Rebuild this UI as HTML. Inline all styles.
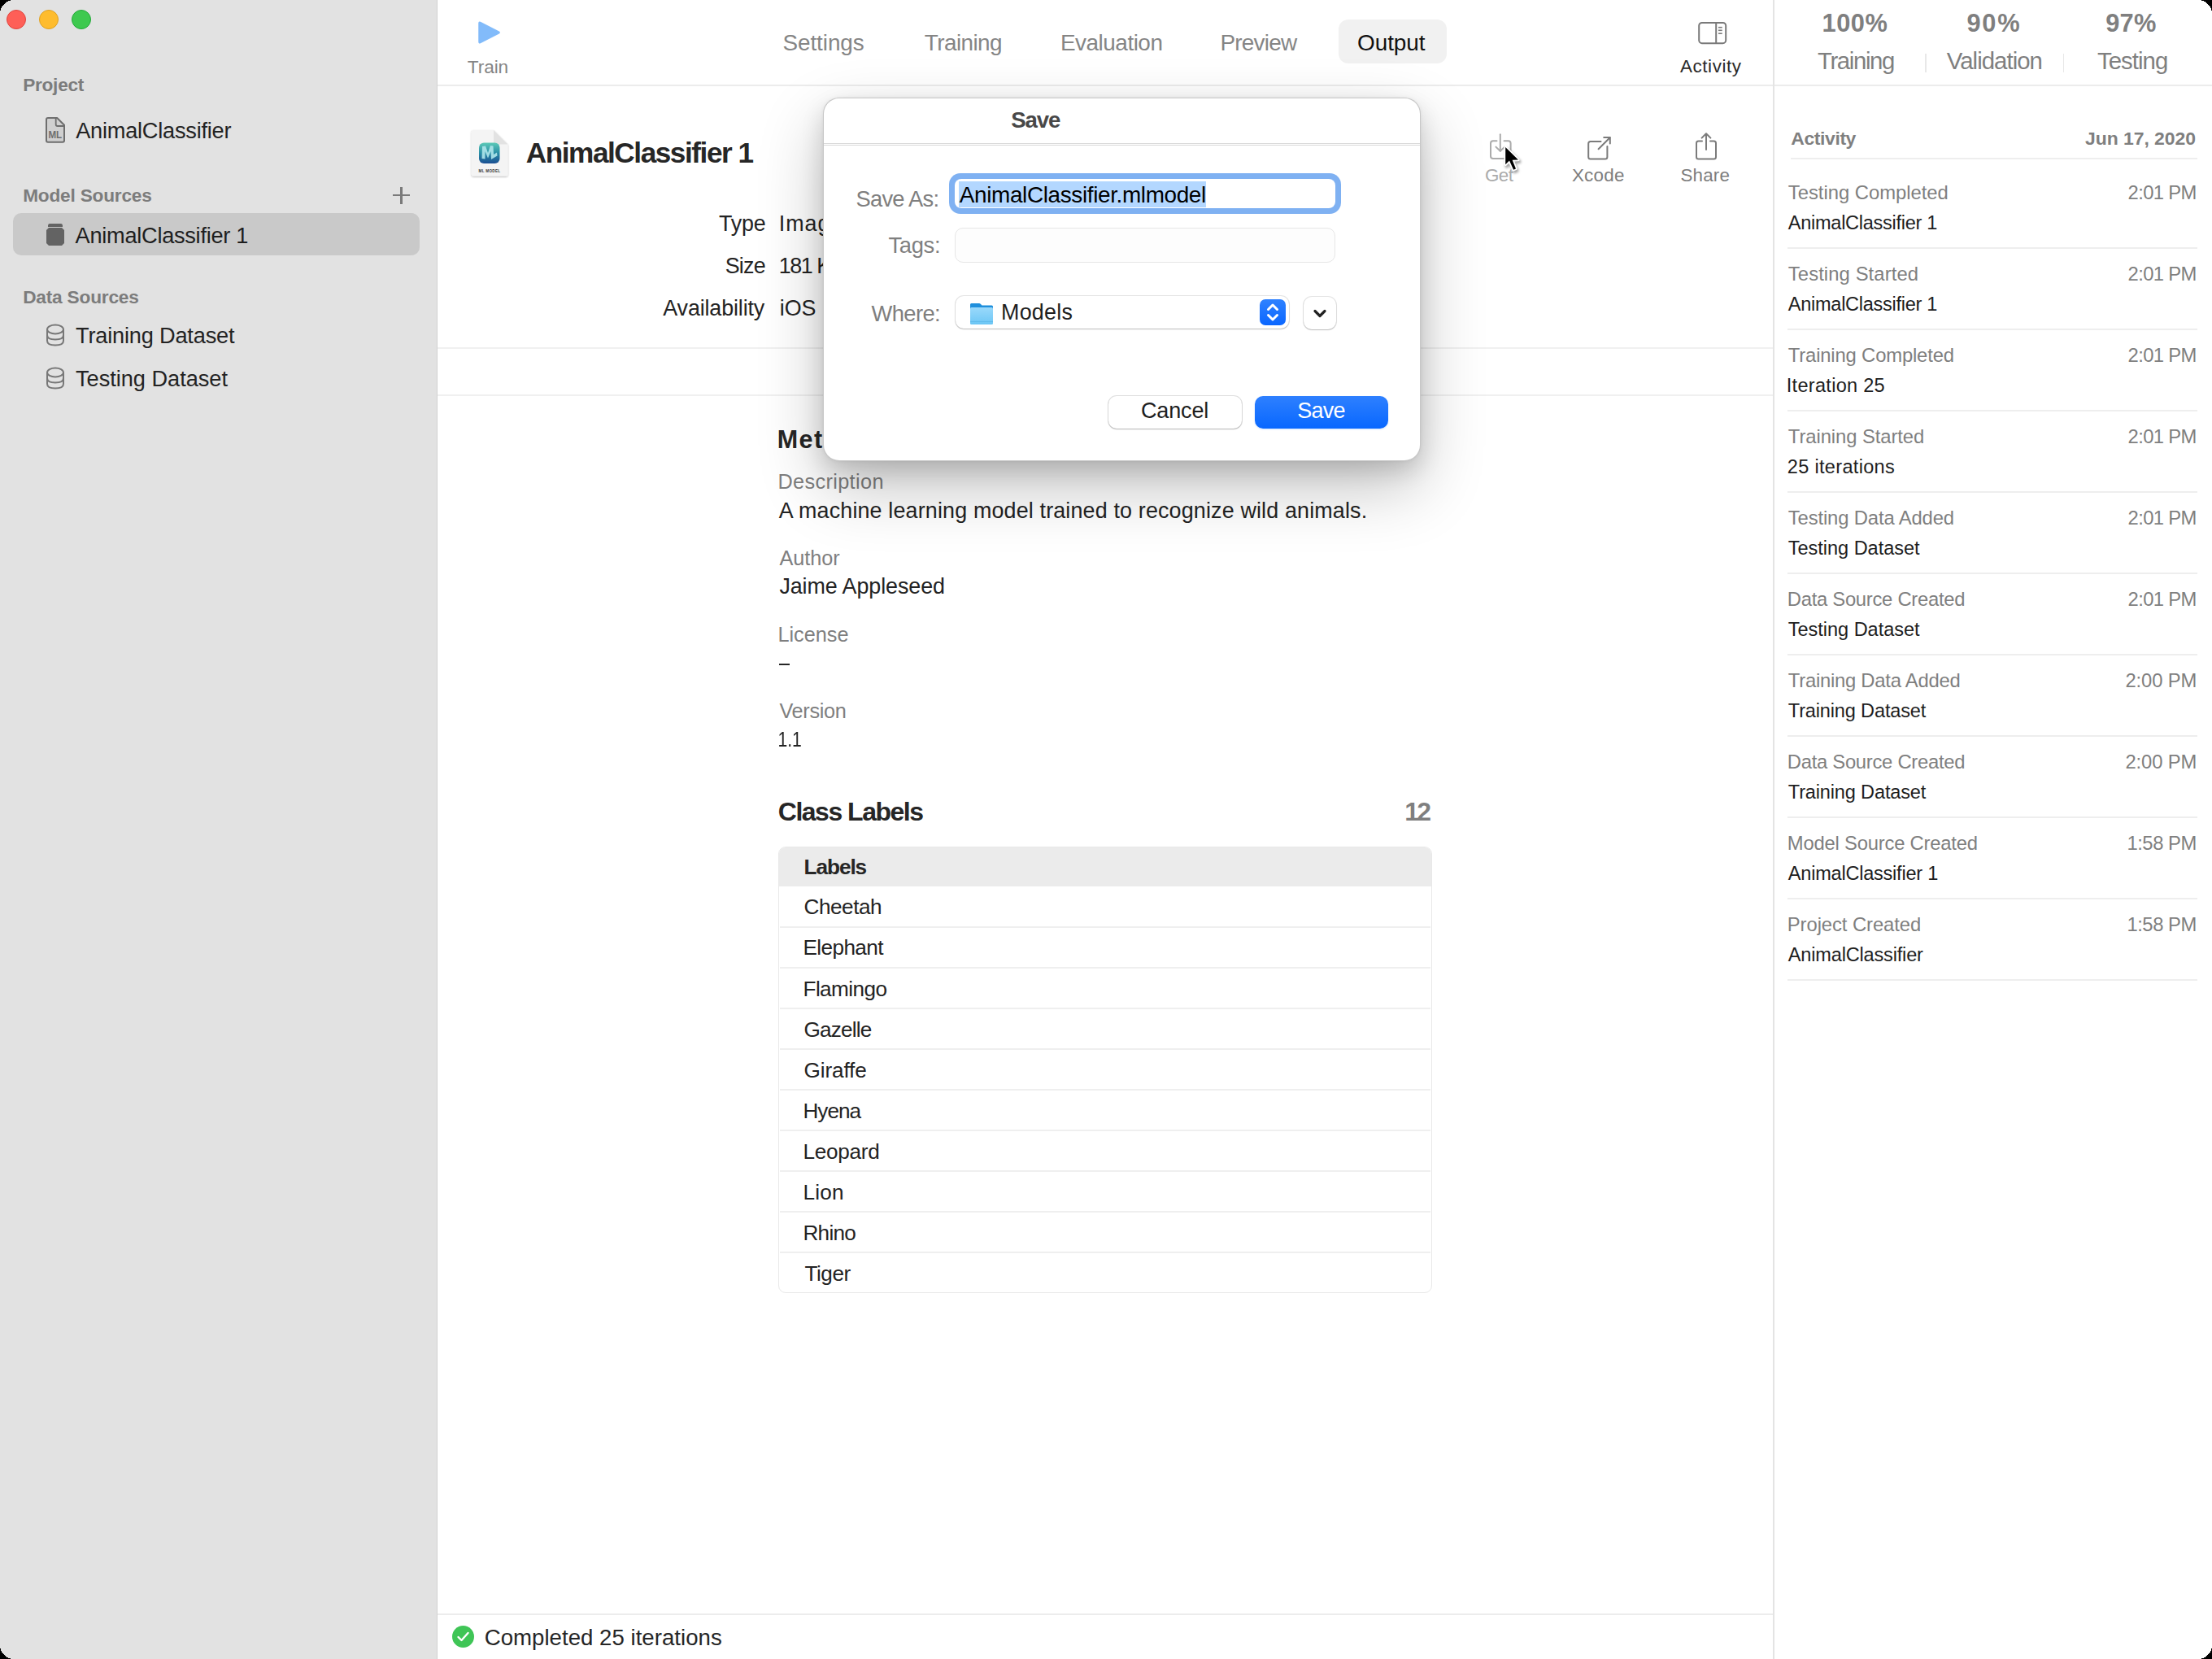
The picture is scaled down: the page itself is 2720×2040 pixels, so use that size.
<!DOCTYPE html>
<html><head><meta charset="utf-8"><style>
html,body{margin:0;padding:0;background:#000;width:2720px;height:2040px;overflow:hidden}
#win{position:absolute;left:0;top:0;width:2720px;height:2040px;overflow:hidden;background:#fff;font-family:"Liberation Sans",sans-serif}
.t{position:absolute;white-space:nowrap;line-height:1;font-family:"Liberation Sans",sans-serif}
.a{position:absolute;box-sizing:border-box}
svg{position:absolute;overflow:visible}

</style></head><body>
<div id="win">
<!-- sidebar -->
<div class="a" style="left:0;top:0;width:538px;height:2040px;background:#e2e2e2;border-right:1px solid #d2d2d2"></div>
<div class="a" style="left:8px;top:12px;width:24px;height:24px;border-radius:50%;background:#fe5f57;border:1px solid #e0443e"></div>
<div class="a" style="left:48px;top:12px;width:24px;height:24px;border-radius:50%;background:#febc2e;border:1px solid #dea123"></div>
<div class="a" style="left:88px;top:12px;width:24px;height:24px;border-radius:50%;background:#3ec94f;border:1px solid #25a93a"></div>
<!-- selection -->
<div class="a" style="left:16px;top:262px;width:500px;height:52px;border-radius:10px;background:#c9c9c9"></div>
<!-- sidebar icons -->
<svg style="left:56px;top:144px" width="24" height="32" viewBox="0 0 24 32">
  <path d="M1 3 Q1 1 3 1 H14.2 L23 9.8 V28.7 Q23 30.7 21 30.7 H3 Q1 30.7 1 28.7 Z" fill="#d0d0d0" stroke="#6e6e6e" stroke-width="2" stroke-linejoin="round"/>
  <path d="M12.7 1 V9 Q12.7 11 14.7 11 H23" fill="none" stroke="#6e6e6e" stroke-width="1.8"/>
  <text x="3.4" y="26" font-family="Liberation Sans" font-weight="700" font-size="13" fill="#6e6e6e" textLength="16.8" lengthAdjust="spacingAndGlyphs">ML</text>
</svg>
<svg style="left:56px;top:274px" width="24" height="30" viewBox="0 0 24 30">
  <path d="M5 1 H19 Q20.5 1 21 3 V5 H3 V3 Q3.5 1 5 1 Z" fill="#636363"/>
  <path d="M4 6 H20 L23 9 V25 L20 28 H4 L1 25 V9 Z" fill="#636363"/>
</svg>
<svg style="left:56px;top:398px" width="24" height="28" viewBox="0 0 24 28">
  <g fill="none" stroke="#787878" stroke-width="2">
  <ellipse cx="12" cy="7" rx="10" ry="5.5"/>
  <path d="M2 7 V21 Q2 26.5 12 26.5 Q22 26.5 22 21 V7"/>
  <path d="M2 14 Q2 19.5 12 19.5 Q22 19.5 22 14"/>
  </g>
</svg>
<svg style="left:56px;top:451px" width="24" height="28" viewBox="0 0 24 28">
  <g fill="none" stroke="#787878" stroke-width="2">
  <ellipse cx="12" cy="7" rx="10" ry="5.5"/>
  <path d="M2 7 V21 Q2 26.5 12 26.5 Q22 26.5 22 21 V7"/>
  <path d="M2 14 Q2 19.5 12 19.5 Q22 19.5 22 14"/>
  </g>
</svg>
<!-- plus -->
<div class="a" style="left:483px;top:239px;width:21px;height:2.4px;background:#7a7a7a"></div>
<div class="a" style="left:492.3px;top:229.8px;width:2.4px;height:21px;background:#7a7a7a"></div>

<!-- toolbar line -->
<div class="a" style="left:538px;top:104px;width:2182px;height:2px;background:#ececec"></div>
<!-- right divider -->
<div class="a" style="left:2180px;top:0;width:2px;height:2040px;background:#e4e4e4"></div>
<!-- play icon -->
<svg style="left:587px;top:25px" width="30" height="30" viewBox="0 0 30 30">
  <path d="M3.5 2.5 Q2 1.8 2 3.5 V26.5 Q2 28.2 3.5 27.5 L26.5 15.8 Q27.8 15 26.5 14.2 Z" fill="#82bbfa" stroke="#82bbfa" stroke-width="1.5" stroke-linejoin="round"/>
</svg>
<!-- Output highlight -->
<div class="a" style="left:1646px;top:24px;width:133px;height:54px;border-radius:12px;background:#f1f1f1"></div>
<!-- activity toolbar icon -->
<svg style="left:2087px;top:26px" width="36" height="28" viewBox="0 0 36 28">
  <rect x="2.2" y="2" width="33" height="25.2" rx="3.6" fill="none" stroke="#7a7a7a" stroke-width="2"/>
  <line x1="23.2" y1="2" x2="23.2" y2="27.2" stroke="#7a7a7a" stroke-width="2"/>
  <line x1="26" y1="7.7" x2="30.7" y2="7.7" stroke="#7a7a7a" stroke-width="1.6"/>
  <line x1="26" y1="11.3" x2="30.7" y2="11.3" stroke="#7a7a7a" stroke-width="1.6"/>
  <line x1="26" y1="15.2" x2="30.7" y2="15.2" stroke="#7a7a7a" stroke-width="1.6"/>
</svg>

<!-- header -->
<svg style="left:578px;top:158px" width="50" height="62" viewBox="0 0 50 62">
  <defs>
   <linearGradient id="mlg" x1="0" y1="0" x2="0" y2="1"><stop offset="0" stop-color="#5ccab7"/><stop offset="0.5" stop-color="#2a8fa6"/><stop offset="1" stop-color="#1b4f93"/></linearGradient>
   <filter id="dsh" x="-20%" y="-20%" width="140%" height="140%"><feDropShadow dx="0" dy="1" stdDeviation="1" flood-color="#000" flood-opacity="0.3"/></filter>
  </defs>
  <path d="M4 2 H29 L46.5 19.5 V56 Q46.5 58.5 44 58.5 H4 Q1.8 58.5 1.8 56 V4.5 Q1.8 2 4 2 Z" fill="#f4f4f4" filter="url(#dsh)"/>
  <path d="M29 2 V16.5 Q29 19.5 32 19.5 H46.5 Z" fill="#e2e2e2"/>
  <rect x="11" y="17.5" width="25.5" height="25.5" rx="6" fill="url(#mlg)"/>
  <path d="M14.5 37 L15 22 L19 21.5 L22 30 L25 21 L28.5 21.5 L29 32 L33 29.5 L33.5 33.5 L26 38 L25.5 28 L22 36.5 L18.5 28 L18.5 37.5 Z" fill="#aee6ea" opacity="0.9"/>
  <text x="24" y="53.5" font-family="Liberation Sans" font-weight="700" font-size="4.6" fill="#333" text-anchor="middle" letter-spacing="0.3">ML MODEL</text>
</svg>
<!-- header separators -->
<div class="a" style="left:538px;top:427px;width:1642px;height:2px;background:#f0f0f0"></div>
<div class="a" style="left:538px;top:485px;width:1642px;height:2px;background:#f0f0f0"></div>

<!-- Get / Xcode / Share icons -->
<svg style="left:1830px;top:163px" width="30" height="36" viewBox="0 0 30 36">
  <g fill="none" stroke="#ababab" stroke-width="2" stroke-linecap="round" stroke-linejoin="round">
  <path d="M10.5 10.2 H6 Q3 10.2 3 13.2 V29.1 Q3 32.1 6 32.1 H24.6 Q27.6 32.1 27.6 29.1 V13.2 Q27.6 10.2 24.6 10.2 H19.5"/>
  <path d="M14.8 2.2 V22.8"/><path d="M9.4 17.6 L14.8 22.8 L20.2 17.6"/>
  </g>
</svg>
<svg style="left:1950px;top:165px" width="34" height="34" viewBox="0 0 34 34">
  <g fill="none" stroke="#7b7b7b" stroke-width="2" stroke-linecap="round" stroke-linejoin="round">
  <path d="M18.5 9.1 H5.7 Q3.2 9.1 3.2 11.6 V28.1 Q3.2 30.6 5.7 30.6 H23.9 Q26.4 30.6 26.4 28.1 V15"/>
  <path d="M15.6 18.3 L29.6 4.2"/><path d="M22.2 4 H29.8 V11.5"/>
  </g>
</svg>
<svg style="left:2083px;top:162px" width="30" height="36" viewBox="0 0 30 36">
  <g fill="none" stroke="#7b7b7b" stroke-width="2" stroke-linecap="round" stroke-linejoin="round">
  <path d="M10 11.6 H5.5 Q3 11.6 3 14.1 V31 Q3 33.5 5.5 33.5 H24.5 Q27 33.5 27 31 V14.1 Q27 11.6 24.5 11.6 H20"/>
  <path d="M15 3 V22"/><path d="M9.6 7.6 L15 2.2 L20.4 7.6"/>
  </g>
</svg>

<!-- metadata dash -->
<div class="a" style="left:958px;top:815.5px;width:13px;height:2.2px;background:#262626"></div>

<!-- table -->
<div class="a" style="left:957px;top:1041px;width:804px;height:549px;border:1.5px solid #e9e9e9;border-radius:9px;overflow:hidden;background:#fff">
  <div class="a" style="left:0;top:0;width:100%;height:48px;background:#ebebeb"></div>
</div>
<div class="a" style="left:959px;top:1139.0px;width:800px;height:1.5px;background:#efefef"></div>
<div class="a" style="left:959px;top:1189.0px;width:800px;height:1.5px;background:#efefef"></div>
<div class="a" style="left:959px;top:1239.1px;width:800px;height:1.5px;background:#efefef"></div>
<div class="a" style="left:959px;top:1289.2px;width:800px;height:1.5px;background:#efefef"></div>
<div class="a" style="left:959px;top:1339.2px;width:800px;height:1.5px;background:#efefef"></div>
<div class="a" style="left:959px;top:1389.2px;width:800px;height:1.5px;background:#efefef"></div>
<div class="a" style="left:959px;top:1439.3px;width:800px;height:1.5px;background:#efefef"></div>
<div class="a" style="left:959px;top:1489.3px;width:800px;height:1.5px;background:#efefef"></div>
<div class="a" style="left:959px;top:1539.4px;width:800px;height:1.5px;background:#efefef"></div>
<div class="a" style="left:538px;top:1984px;width:1642px;height:2px;background:#ececec"></div>
<svg style="left:555px;top:1998px" width="29" height="29" viewBox="0 0 29 29"><circle cx="14.5" cy="14.5" r="13.5" fill="#3fc556"/><path d="M8.5 15 L12.5 19 L20.5 10" fill="none" stroke="#fff" stroke-width="2.4" stroke-linecap="round" stroke-linejoin="round"/></svg>
<div class="a" style="left:2367px;top:66px;width:1.5px;height:23px;background:#e8e8e8"></div>
<div class="a" style="left:2536.5px;top:66px;width:1.5px;height:23px;background:#e8e8e8"></div>
<div class="a" style="left:2202px;top:194px;width:500px;height:2px;background:#eeeeee"></div>
<div class="a" style="left:2198px;top:304px;width:504px;height:2px;background:#eeeeee"></div>
<div class="a" style="left:2198px;top:404px;width:504px;height:2px;background:#eeeeee"></div>
<div class="a" style="left:2198px;top:504px;width:504px;height:2px;background:#eeeeee"></div>
<div class="a" style="left:2198px;top:604px;width:504px;height:2px;background:#eeeeee"></div>
<div class="a" style="left:2198px;top:704px;width:504px;height:2px;background:#eeeeee"></div>
<div class="a" style="left:2198px;top:804px;width:504px;height:2px;background:#eeeeee"></div>
<div class="a" style="left:2198px;top:904px;width:504px;height:2px;background:#eeeeee"></div>
<div class="a" style="left:2198px;top:1004px;width:504px;height:2px;background:#eeeeee"></div>
<div class="a" style="left:2198px;top:1104px;width:504px;height:2px;background:#eeeeee"></div>
<div class="a" style="left:2198px;top:1204px;width:504px;height:2px;background:#eeeeee"></div>
<!-- dialog -->
<div class="a" style="left:1012px;top:119.8px;width:734.5px;height:447.2px;border-radius:20px;background:#fff;border:1px solid rgba(0,0,0,0.22);box-shadow:0 32px 80px rgba(0,0,0,0.24), 0 12px 28px rgba(0,0,0,0.14), 0 0 4px rgba(0,0,0,0.06);z-index:40"></div>
<div class="a" style="left:1013px;top:176px;width:733px;height:3px;border-top:1px solid #d9d9d9;border-bottom:1px solid #d9d9d9;z-index:45"></div>
<!-- save as field -->
<div class="a" style="left:1167px;top:213px;width:482px;height:50px;border-radius:14px;background:#7fb1f2;z-index:45"></div>
<div class="a" style="left:1174px;top:220px;width:468px;height:36px;border-radius:8px;background:#fff;z-index:46"></div>
<div class="a" style="left:1179px;top:223px;width:303.5px;height:31.5px;background:#b3d7ff;z-index:47"></div>
<!-- tags field -->
<div class="a" style="left:1173.5px;top:279.5px;width:468px;height:43px;border-radius:10px;background:#fdfdfd;border:1.5px solid #e6e6e6;z-index:45"></div>
<!-- where popup -->
<div class="a" style="left:1175px;top:364px;width:410px;height:40px;border-radius:10px;background:#fff;box-shadow:0 0 0 1px rgba(0,0,0,0.1), 0 1px 1.5px rgba(0,0,0,0.18);z-index:45"></div>
<svg style="left:1192px;top:372px;z-index:46" width="30" height="28" viewBox="0 0 30 28">
  <defs><linearGradient id="fg" x1="0" y1="0" x2="0" y2="1"><stop offset="0" stop-color="#9ad9fb"/><stop offset="1" stop-color="#6cc6f5"/></linearGradient></defs>
  <path d="M2.5 1 H12 Q13 1 14 2 L15.5 3.5 H27.5 Q29 3.5 29 5 V10 H1 V2.5 Q1 1 2.5 1 Z" fill="#1f8fdc"/>
  <path d="M1 7.5 Q1 6 2.5 6 H27.5 Q29 6 29 7.5 V25.5 Q29 27 27.5 27 H2.5 Q1 27 1 25.5 Z" fill="url(#fg)"/>
  <rect x="1" y="23" width="28" height="1" fill="#5ab6e8" opacity="0.7"/>
</svg>
<div class="a" style="left:1549px;top:368px;width:32px;height:32px;border-radius:7px;background:linear-gradient(#2f82ff,#0a66ff);z-index:46"></div>
<svg style="left:1549px;top:368px;z-index:47" width="32" height="32" viewBox="0 0 32 32">
  <g fill="none" stroke="#fff" stroke-width="3" stroke-linecap="round" stroke-linejoin="round">
  <path d="M10.5 12.5 L16 7 L21.5 12.5"/><path d="M10.5 19.5 L16 25 L21.5 19.5"/>
  </g>
</svg>
<div class="a" style="left:1603px;top:365px;width:40px;height:40px;border-radius:10px;background:#fff;box-shadow:0 0 0 1px rgba(0,0,0,0.1), 0 1px 1.5px rgba(0,0,0,0.18);z-index:45"></div>
<svg style="left:1603px;top:365px;z-index:46" width="40" height="40" viewBox="0 0 40 40">
  <path d="M14 17.5 L20 23.5 L26 17.5" fill="none" stroke="#222" stroke-width="3.2" stroke-linecap="round" stroke-linejoin="round"/>
</svg>
<!-- buttons -->
<div class="a" style="left:1363px;top:487px;width:164px;height:40px;border-radius:10px;background:#fff;box-shadow:0 0 0 1px rgba(0,0,0,0.12), 0 1px 1.5px rgba(0,0,0,0.2);z-index:45"></div>
<div class="a" style="left:1543px;top:487px;width:164px;height:40px;border-radius:10px;background:linear-gradient(#2e80ff,#0867ff);box-shadow:0 1px 2px rgba(0,100,255,0.2);z-index:45"></div>

<!-- cursor -->
<svg style="left:0;top:0;z-index:60" width="2720" height="2040" viewBox="0 0 2720 2040">
  <defs><filter id="csh" x="-50%" y="-50%" width="200%" height="200%"><feGaussianBlur stdDeviation="1.6"/></filter></defs>
  <path d="M1851.2 181 L1851.2 202.3 L1856 197.6 L1861.1 208.7 L1864 207.4 L1859.6 196.8 L1866.9 196.5 Z" transform="translate(1.5,2.5)" fill="none" stroke="rgba(0,0,0,0.35)" stroke-width="4" stroke-linejoin="round" filter="url(#csh)"/>
  <path d="M1851.2 181 L1851.2 202.3 L1856 197.6 L1861.1 208.7 L1864 207.4 L1859.6 196.8 L1866.9 196.5 Z" fill="#000" stroke="#fff" stroke-width="3.6" stroke-linejoin="round" paint-order="stroke"/>
</svg>

<svg style="left:0;top:0;z-index:100" width="2720" height="2040" viewBox="0 0 2720 2040" shape-rendering="crispEdges">
  <path d="M0 0 H17 A17 17 0 0 0 0 17 Z" fill="#000"/>
  <path d="M2720 0 H2703 A17 17 0 0 1 2720 17 Z" fill="#000"/>
  <path d="M0 2040 H17 A17 17 0 0 1 0 2023 Z" fill="#000"/>
  <path d="M2720 2040 H2703 A17 17 0 0 0 2720 2023 Z" fill="#000"/>
</svg>

<div class="t" style="left:28.2px;top:92.8px;font-size:22.67px;font-weight:700;color:#7c7c7c;letter-spacing:-0.28px;">Project</div>
<div class="t" style="left:93.2px;top:146.7px;font-size:27.18px;color:#232323;letter-spacing:-0.23px;">AnimalClassifier</div>
<div class="t" style="left:28.2px;top:228.5px;font-size:22.67px;font-weight:700;color:#7c7c7c;letter-spacing:-0.21px;">Model Sources</div>
<div class="t" style="left:92.6px;top:275.8px;font-size:27.18px;color:#1e1e1e;letter-spacing:-0.27px;">AnimalClassifier 1</div>
<div class="t" style="left:28.2px;top:353.6px;font-size:22.67px;font-weight:700;color:#7c7c7c;letter-spacing:-0.20px;">Data Sources</div>
<div class="t" style="left:93.0px;top:398.7px;font-size:27.18px;color:#232323;letter-spacing:-0.19px;">Training Dataset</div>
<div class="t" style="left:93.0px;top:451.7px;font-size:27.18px;color:#232323;letter-spacing:-0.02px;">Testing Dataset</div>
<div class="t" style="left:574.8px;top:70.5px;font-size:22.67px;color:#858585;letter-spacing:-0.09px;">Train</div>
<div class="t" style="left:962.4px;top:38.6px;font-size:27.91px;color:#858585;letter-spacing:-0.07px;">Settings</div>
<div class="t" style="left:1136.8px;top:38.6px;font-size:27.91px;color:#858585;letter-spacing:-0.58px;">Training</div>
<div class="t" style="left:1304.0px;top:38.6px;font-size:27.91px;color:#858585;letter-spacing:-0.49px;">Evaluation</div>
<div class="t" style="left:1500.5px;top:38.6px;font-size:27.91px;color:#858585;letter-spacing:-0.77px;">Preview</div>
<div class="t" style="left:1669.0px;top:38.6px;font-size:27.91px;color:#111;letter-spacing:-0.04px;">Output</div>
<div class="t" style="left:2066.0px;top:71.0px;font-size:22.38px;color:#2a2a2a;letter-spacing:0.59px;">Activity</div>
<div class="t" style="left:646.8px;top:170.3px;font-size:35.17px;font-weight:700;color:#262626;letter-spacing:-1.44px;">AnimalClassifier 1</div>
<div class="t" style="left:884.0px;top:262.0px;font-size:26.89px;color:#232323;letter-spacing:-0.17px;">Type</div>
<div class="t" style="left:891.7px;top:313.7px;font-size:26.89px;color:#232323;letter-spacing:-0.74px;">Size</div>
<div class="t" style="left:815.3px;top:366.0px;font-size:26.89px;color:#232323;letter-spacing:-0.14px;">Availability</div>
<div class="t" style="left:957.8px;top:262.0px;font-size:26.89px;color:#232323;letter-spacing:0.95px;">Image Classifier</div>
<div class="t" style="left:957.8px;top:313.7px;font-size:26.89px;color:#232323;letter-spacing:-1.45px;">181 KB</div>
<div class="t" style="left:958.8px;top:366.0px;font-size:26.89px;color:#232323;letter-spacing:-0.07px;">iOS 14.0+</div>
<div class="t" style="left:1826.0px;top:204.8px;font-size:22.38px;color:#ababab;letter-spacing:-0.57px;">Get</div>
<div class="t" style="left:1932.9px;top:204.8px;font-size:22.38px;color:#7d7d7d;letter-spacing:0.25px;">Xcode</div>
<div class="t" style="left:2066.5px;top:204.8px;font-size:22.38px;color:#7d7d7d;letter-spacing:0.16px;">Share</div>
<div class="t" style="left:955.8px;top:525.0px;font-size:30.52px;font-weight:700;color:#262626;letter-spacing:1.4px;">Metadata</div>
<div class="t" style="left:956.4px;top:580.0px;font-size:25.29px;color:#7f7f7f;letter-spacing:0.36px;">Description</div>
<div class="t" style="left:957.8px;top:614.6px;font-size:26.89px;color:#232323;letter-spacing:0.16px;">A machine learning model trained to recognize wild animals.</div>
<div class="t" style="left:958.4px;top:674.0px;font-size:25.29px;color:#7f7f7f;letter-spacing:-0.05px;">Author</div>
<div class="t" style="left:958.4px;top:708.3px;font-size:26.89px;color:#232323;letter-spacing:-0.08px;">Jaime Appleseed</div>
<div class="t" style="left:956.4px;top:767.7px;font-size:25.29px;color:#7f7f7f;">License</div>
<div class="t" style="left:958.4px;top:861.5px;font-size:25.29px;color:#7f7f7f;letter-spacing:-0.31px;">Version</div>
<div class="t" style="left:956.4px;top:896.0px;font-size:26.6px;color:#232323;transform:scaleX(0.7958);transform-origin:2.00px 0;">1.1</div>
<div class="t" style="left:956.8px;top:982.4px;font-size:31.98px;font-weight:700;color:#262626;letter-spacing:-1.48px;">Class Labels</div>
<div class="t" style="left:1727.2px;top:982.4px;font-size:31.98px;font-weight:700;color:#7f7f7f;letter-spacing:-2.68px;">12</div>
<div class="t" style="left:988.5px;top:1052.5px;font-size:26.16px;font-weight:700;color:#262626;letter-spacing:-1.04px;">Labels</div>
<div class="t" style="left:988.5px;top:1102.4px;font-size:26.16px;color:#232323;letter-spacing:-0.46px;">Cheetah</div>
<div class="t" style="left:987.5px;top:1152.4px;font-size:26.16px;color:#232323;letter-spacing:-0.61px;">Elephant</div>
<div class="t" style="left:987.5px;top:1202.5px;font-size:26.16px;color:#232323;letter-spacing:-0.59px;">Flamingo</div>
<div class="t" style="left:988.5px;top:1252.5px;font-size:26.16px;color:#232323;letter-spacing:-0.82px;">Gazelle</div>
<div class="t" style="left:988.5px;top:1302.6px;font-size:26.16px;color:#232323;letter-spacing:-0.13px;">Giraffe</div>
<div class="t" style="left:987.5px;top:1352.6px;font-size:26.16px;color:#232323;letter-spacing:-1.02px;">Hyena</div>
<div class="t" style="left:987.5px;top:1402.7px;font-size:26.16px;color:#232323;letter-spacing:-0.29px;">Leopard</div>
<div class="t" style="left:987.5px;top:1452.7px;font-size:26.16px;color:#232323;letter-spacing:0.17px;">Lion</div>
<div class="t" style="left:987.5px;top:1502.8px;font-size:26.16px;color:#232323;letter-spacing:-0.77px;">Rhino</div>
<div class="t" style="left:989.5px;top:1552.8px;font-size:26.16px;color:#232323;letter-spacing:-0.48px;">Tiger</div>
<div class="t" style="left:595.7px;top:1999.5px;font-size:27.62px;color:#262626;letter-spacing:0.02px;">Completed 25 iterations</div>
<div class="t" style="left:2240.6px;top:13.6px;font-size:30.81px;font-weight:700;color:#7f7f7f;letter-spacing:0.47px;">100%</div>
<div class="t" style="left:2418.4px;top:13.6px;font-size:30.81px;font-weight:700;color:#7f7f7f;letter-spacing:1.82px;">90%</div>
<div class="t" style="left:2589.2px;top:13.6px;font-size:30.81px;font-weight:700;color:#7f7f7f;letter-spacing:0.27px;">97%</div>
<div class="t" style="left:2235.0px;top:59.6px;font-size:29.36px;color:#7f7f7f;letter-spacing:-1.38px;">Training</div>
<div class="t" style="left:2393.8px;top:59.6px;font-size:29.36px;color:#7f7f7f;letter-spacing:-0.96px;">Validation</div>
<div class="t" style="left:2579.0px;top:59.6px;font-size:29.36px;color:#7f7f7f;letter-spacing:-0.95px;">Testing</div>
<div class="t" style="left:2202.3px;top:158.5px;font-size:22.97px;font-weight:700;color:#7f7f7f;letter-spacing:-0.41px;">Activity</div>
<div class="t" style="left:2564.1px;top:158.5px;font-size:22.97px;font-weight:700;color:#7f7f7f;letter-spacing:-0.07px;">Jun 17, 2020</div>
<div class="t" style="left:2198.8px;top:224.6px;font-size:23.84px;color:#7f7f7f;letter-spacing:-0.02px;">Testing Completed</div>
<div class="t" style="left:2616.6px;top:224.6px;font-size:23.84px;color:#7f7f7f;letter-spacing:-0.66px;">2:01 PM</div>
<div class="t" style="left:2198.8px;top:263.0px;font-size:23.55px;color:#1e1e1e;letter-spacing:-0.28px;">AnimalClassifier 1</div>
<div class="t" style="left:2198.8px;top:324.6px;font-size:23.84px;color:#7f7f7f;letter-spacing:0.09px;">Testing Started</div>
<div class="t" style="left:2616.6px;top:324.6px;font-size:23.84px;color:#7f7f7f;letter-spacing:-0.66px;">2:01 PM</div>
<div class="t" style="left:2198.8px;top:363.0px;font-size:23.55px;color:#1e1e1e;letter-spacing:-0.28px;">AnimalClassifier 1</div>
<div class="t" style="left:2198.8px;top:424.6px;font-size:23.84px;color:#7f7f7f;letter-spacing:-0.17px;">Training Completed</div>
<div class="t" style="left:2616.6px;top:424.6px;font-size:23.84px;color:#7f7f7f;letter-spacing:-0.66px;">2:01 PM</div>
<div class="t" style="left:2196.8px;top:463.0px;font-size:23.55px;color:#1e1e1e;letter-spacing:0.28px;">Iteration 25</div>
<div class="t" style="left:2198.8px;top:524.6px;font-size:23.84px;color:#7f7f7f;letter-spacing:-0.08px;">Training Started</div>
<div class="t" style="left:2616.6px;top:524.6px;font-size:23.84px;color:#7f7f7f;letter-spacing:-0.66px;">2:01 PM</div>
<div class="t" style="left:2197.8px;top:563.0px;font-size:23.55px;color:#1e1e1e;letter-spacing:0.31px;">25 iterations</div>
<div class="t" style="left:2198.8px;top:624.6px;font-size:23.84px;color:#7f7f7f;letter-spacing:-0.14px;">Testing Data Added</div>
<div class="t" style="left:2616.6px;top:624.6px;font-size:23.84px;color:#7f7f7f;letter-spacing:-0.66px;">2:01 PM</div>
<div class="t" style="left:2198.8px;top:663.0px;font-size:23.55px;color:#1e1e1e;letter-spacing:-0.04px;">Testing Dataset</div>
<div class="t" style="left:2197.8px;top:724.6px;font-size:23.84px;color:#7f7f7f;letter-spacing:-0.29px;">Data Source Created</div>
<div class="t" style="left:2616.6px;top:724.6px;font-size:23.84px;color:#7f7f7f;letter-spacing:-0.66px;">2:01 PM</div>
<div class="t" style="left:2198.8px;top:763.0px;font-size:23.55px;color:#1e1e1e;letter-spacing:-0.04px;">Testing Dataset</div>
<div class="t" style="left:2198.8px;top:824.6px;font-size:23.84px;color:#7f7f7f;letter-spacing:-0.25px;">Training Data Added</div>
<div class="t" style="left:2613.4px;top:824.6px;font-size:23.84px;color:#7f7f7f;letter-spacing:-0.13px;">2:00 PM</div>
<div class="t" style="left:2198.8px;top:863.0px;font-size:23.55px;color:#1e1e1e;letter-spacing:-0.16px;">Training Dataset</div>
<div class="t" style="left:2197.8px;top:924.6px;font-size:23.84px;color:#7f7f7f;letter-spacing:-0.29px;">Data Source Created</div>
<div class="t" style="left:2613.4px;top:924.6px;font-size:23.84px;color:#7f7f7f;letter-spacing:-0.13px;">2:00 PM</div>
<div class="t" style="left:2198.8px;top:963.0px;font-size:23.55px;color:#1e1e1e;letter-spacing:-0.16px;">Training Dataset</div>
<div class="t" style="left:2197.8px;top:1024.6px;font-size:23.84px;color:#7f7f7f;letter-spacing:-0.22px;">Model Source Created</div>
<div class="t" style="left:2615.4px;top:1024.6px;font-size:23.84px;color:#7f7f7f;letter-spacing:-0.46px;">1:58 PM</div>
<div class="t" style="left:2198.8px;top:1063.0px;font-size:23.55px;color:#1e1e1e;letter-spacing:-0.23px;">AnimalClassifier 1</div>
<div class="t" style="left:2197.8px;top:1124.6px;font-size:23.84px;color:#7f7f7f;letter-spacing:-0.08px;">Project Created</div>
<div class="t" style="left:2615.4px;top:1124.6px;font-size:23.84px;color:#7f7f7f;letter-spacing:-0.46px;">1:58 PM</div>
<div class="t" style="left:2198.8px;top:1163.0px;font-size:23.55px;color:#1e1e1e;letter-spacing:-0.18px;">AnimalClassifier</div>
<div class="t" style="left:1243.3px;top:133.5px;font-size:27.62px;font-weight:700;color:#484848;letter-spacing:-1.14px;z-index:50;">Save</div>
<div class="t" style="left:1052.6px;top:231.4px;font-size:27.33px;color:#7f7f7f;letter-spacing:-0.77px;z-index:50;">Save As:</div>
<div class="t" style="left:1179.8px;top:225.6px;font-size:27.91px;color:#000;letter-spacing:-0.36px;z-index:52;">AnimalClassifier.mlmodel</div>
<div class="t" style="left:1092.4px;top:287.8px;font-size:27.33px;color:#7f7f7f;letter-spacing:-0.28px;z-index:50;">Tags:</div>
<div class="t" style="left:1071.6px;top:371.8px;font-size:27.33px;color:#7f7f7f;letter-spacing:-0.62px;z-index:50;">Where:</div>
<div class="t" style="left:1231.0px;top:370.9px;font-size:26.89px;color:#1e1e1e;letter-spacing:0.24px;z-index:52;">Models</div>
<div class="t" style="left:1402.9px;top:491.8px;font-size:27.03px;color:#1e1e1e;letter-spacing:-0.14px;z-index:52;">Cancel</div>
<div class="t" style="left:1595.3px;top:491.8px;font-size:27.03px;color:#fff;letter-spacing:-0.82px;z-index:52;">Save</div>
</div>
</body></html>
